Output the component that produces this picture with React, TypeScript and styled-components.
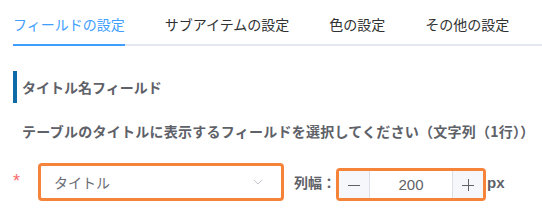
import React from 'react';
import styled, { createGlobalStyle } from 'styled-components';

const GlobalStyle = createGlobalStyle`
  body {
    margin: 0;
    background: #ffffff;
    font-family: "Noto Sans CJK JP", "Noto Sans", "Liberation Sans", sans-serif;
  }
`;

const Page = styled.div`
  padding: 0 0 0 13px;
`;

const TabBar = styled.div`
  display: flex;
  padding-top: 4px;
  border-bottom: 2px solid #e4e7ed;
`;

const Tab = styled.div<{ active?: boolean }>`
  position: relative;
  padding: 0 20px;
  height: 40px;
  line-height: 40px;
  font-size: 14px;
  color: ${p => (p.active ? '#409eff' : '#303133')};
  white-space: nowrap;

  &:first-child {
    padding-left: 0;
  }

  ${p =>
    p.active &&
    `
    &::after {
      content: '';
      position: absolute;
      left: 0;
      right: 20px;
      bottom: -2px;
      height: 2px;
      background: #409eff;
    }
  `}
`;

const SectionTitle = styled.div`
  margin-top: 25px;
  height: 32px;
  line-height: 32px;
  border-left: 4px solid #0e6ba8;
  padding-left: 5px;
  font-size: 14px;
  font-weight: 700;
  color: #5e6168;
`;

const Description = styled.div`
  margin-top: 18px;
  padding-left: 9px;
  line-height: 20px;
  font-size: 14px;
  font-weight: 700;
  letter-spacing: 0.25px;
  color: #5e6168;
  white-space: nowrap;
`;

const FormRow = styled.div`
  display: flex;
  align-items: center;
  margin-top: 22px;
`;

const Required = styled.span`
  width: 25px;
  font-family: "Liberation Sans", Arial, sans-serif;
  font-size: 18px;
  line-height: 18px;
  color: #f56c6c;
  margin-top: -2px;
`;

const SelectBox = styled.div`
  box-sizing: border-box;
  width: 246px;
  height: 38px;
  border: 3px solid #f5843a;
  border-radius: 4px;
  display: flex;
  align-items: center;
  justify-content: space-between;
  padding: 0 18px 0 13px;
  font-size: 14px;
  color: #696c73;
`;

const Label = styled.span`
  margin-left: 10px;
  font-size: 14px;
  font-weight: 700;
  color: #5e6168;
`;

const NumberBox = styled.div`
  box-sizing: border-box;
  width: 150px;
  height: 33px;
  margin-top: 5px;
  border: 3px solid #f5843a;
  border-radius: 4px;
  display: flex;
  align-items: stretch;
  background: #ffffff;
`;

const StepButton = styled.div<{ side: 'left' | 'right' }>`
  width: 30px;
  background: #f5f7fa;
  display: flex;
  align-items: center;
  justify-content: center;
  color: #606266;
  ${p => (p.side === 'left' ? 'border-right: 1px solid #dcdfe6;' : 'border-left: 1px solid #dcdfe6;')}
`;

const NumberValue = styled.div`
  flex: 1;
  display: flex;
  align-items: center;
  justify-content: center;
  font-family: "Liberation Sans", Arial, sans-serif;
  font-size: 15px;
  color: #606266;
`;

const Unit = styled.span`
  margin-left: 1px;
  font-family: "Liberation Sans", Arial, sans-serif;
  font-size: 15px;
  font-weight: 700;
  color: #5e6168;
`;

const Chevron = () => (
  <svg width="10" height="6" viewBox="0 0 10 6">
    <path d="M1 1 L5 5 L9 1" fill="none" stroke="#c0c4cc" strokeWidth="1" />
  </svg>
);

const Minus = () => (
  <svg width="12" height="12" viewBox="0 0 12 12">
    <path d="M0 6.5 H12" stroke="#606266" strokeWidth="1" />
  </svg>
);

const Plus = () => (
  <svg width="12" height="12" viewBox="0 0 12 12">
    <path d="M0 6.5 H12 M6.5 0 V12" stroke="#606266" strokeWidth="1" />
  </svg>
);

const tabs = ['フィールドの設定', 'サブアイテムの設定', '色の設定', 'その他の設定'];

export default function App() {
  return (
    <>
      <GlobalStyle />
      <Page>
        <TabBar>
          {tabs.map((t, i) => (
            <Tab key={t} active={i === 0}>
              {t}
            </Tab>
          ))}
        </TabBar>
        <SectionTitle>タイトル名フィールド</SectionTitle>
        <Description>テーブルのタイトルに表示するフィールドを選択してください（文字列（1行））</Description>
        <FormRow>
          <Required>*</Required>
          <SelectBox>
            <span>タイトル</span>
            <Chevron />
          </SelectBox>
          <Label>列幅：</Label>
          <NumberBox>
            <StepButton side="left">
              <Minus />
            </StepButton>
            <NumberValue>200</NumberValue>
            <StepButton side="right">
              <Plus />
            </StepButton>
          </NumberBox>
          <Unit>px</Unit>
        </FormRow>
      </Page>
    </>
  );
}
